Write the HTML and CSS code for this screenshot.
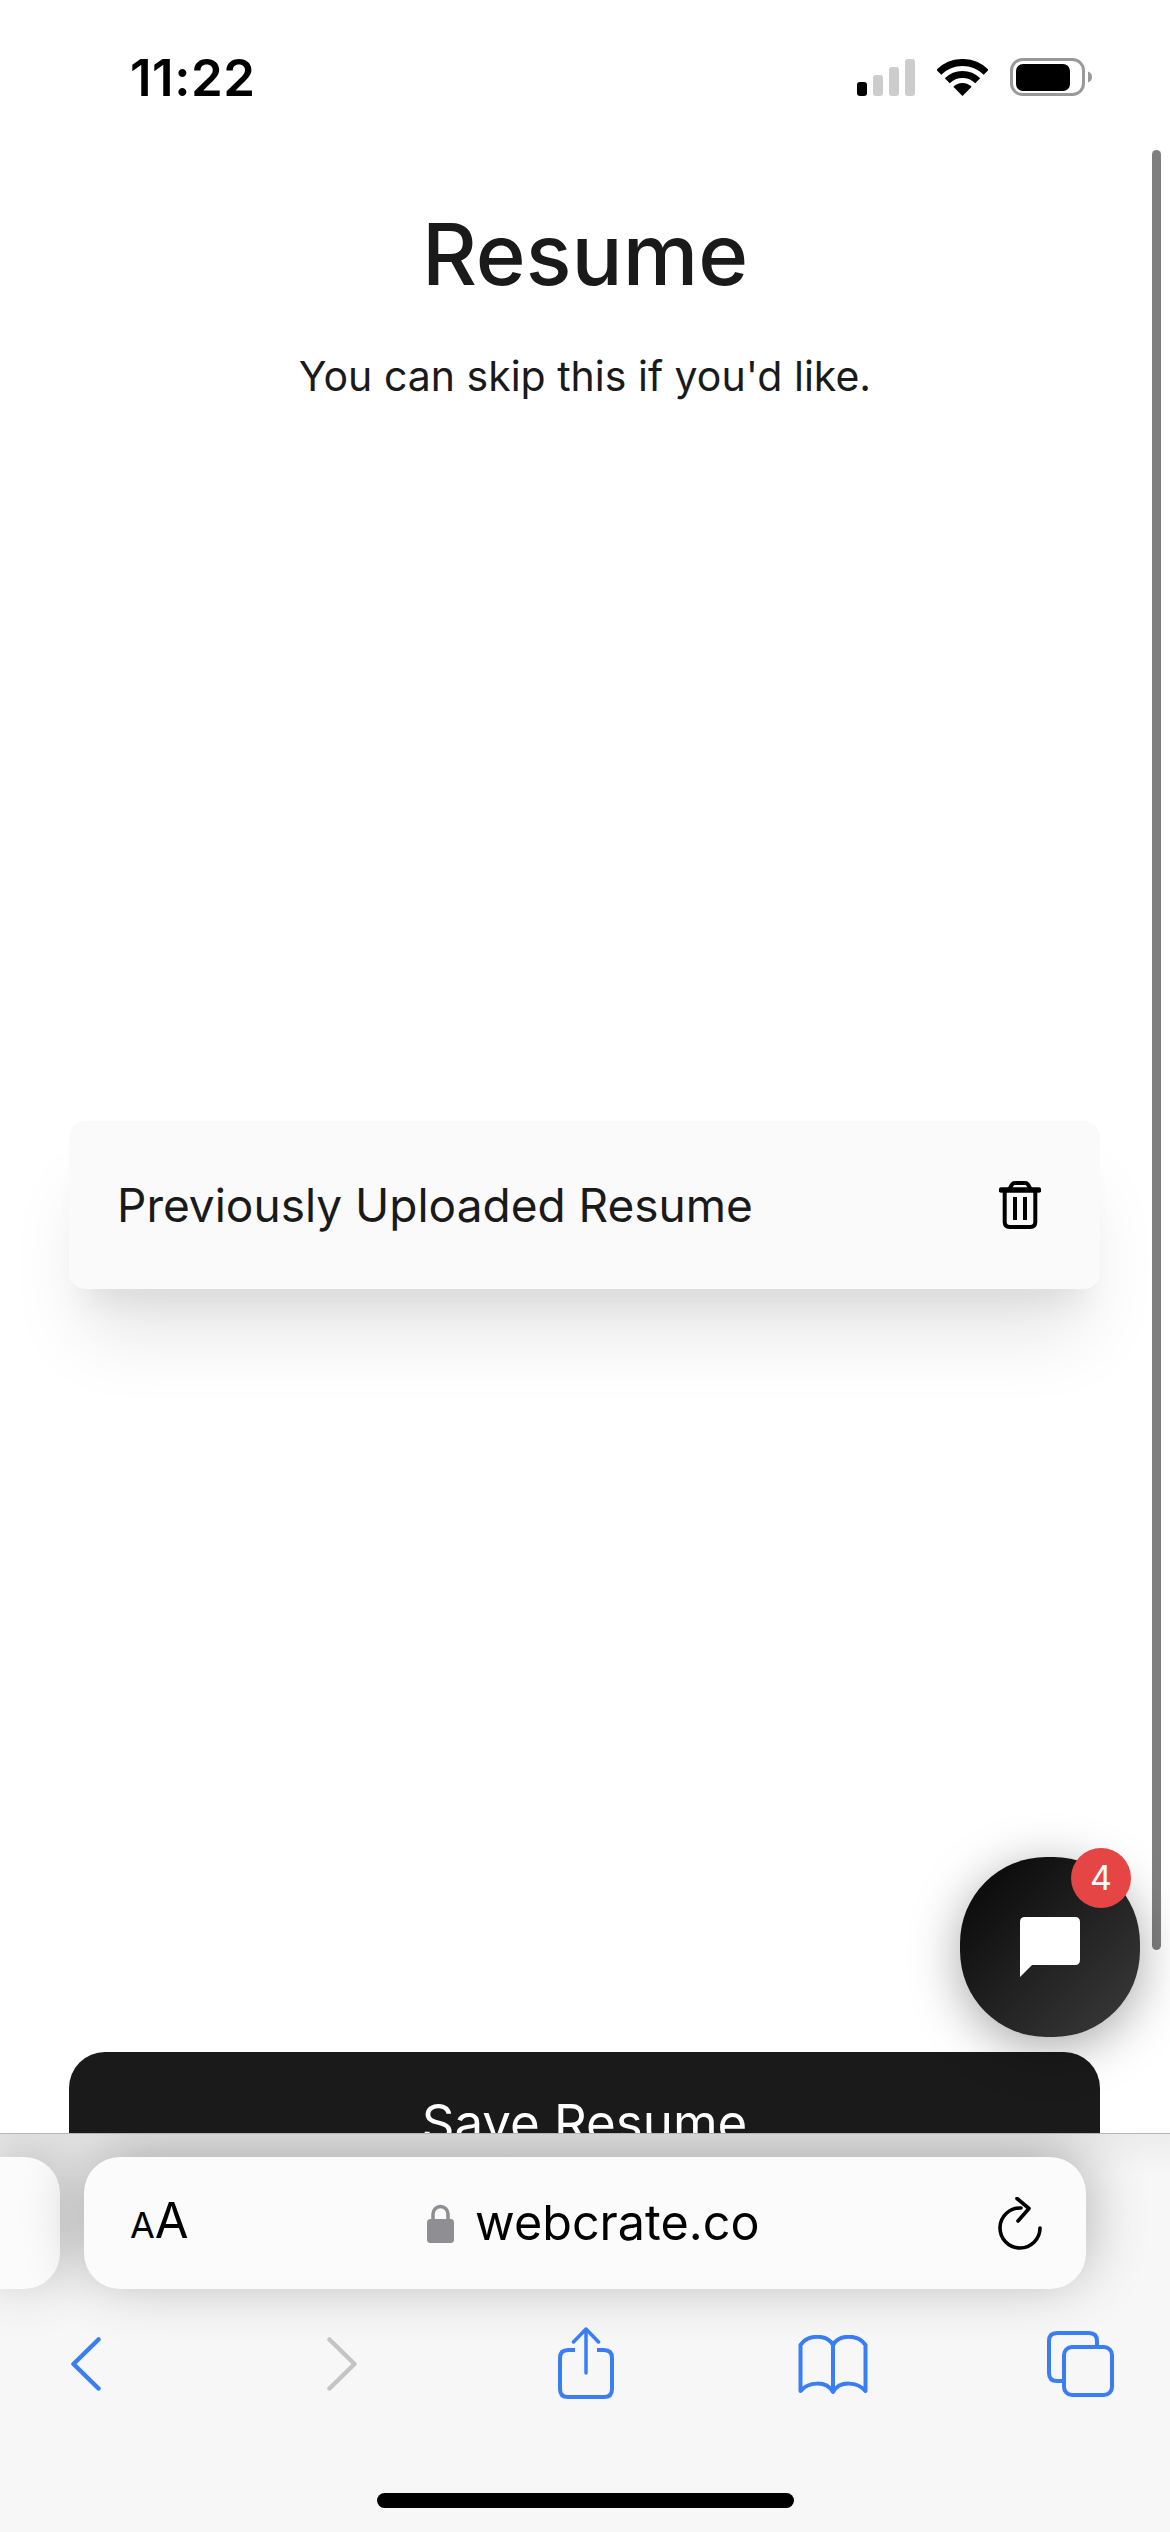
FILE: index.html
```html
<!DOCTYPE html>
<html lang="en">
	<head>
		<meta charset="utf-8" />
		<title>Resume</title>
		<link rel="stylesheet" href="styles.css">
	</head>

	<body>
		<div class="phone">
			<div class="page">
				<div class="status">
					<span class="clock">11:22</span>
					<div class="status-icons">
						<svg class="signal" width="58" height="37" viewBox="0 0 58 37">
							<rect x="0" y="23" width="10" height="14" rx="3" fill="#000" />
							<rect x="16" y="16" width="10" height="21" rx="3" fill="#ccc" />
							<rect x="32" y="8" width="10" height="29" rx="3" fill="#ccc" />
							<rect x="48" y="0" width="10" height="37" rx="3" fill="#ccc" />
						</svg>
						<svg class="wifi" width="51" height="37" viewBox="0 0 51 37">
							<path d="M25.5 37 L16.3 27.8 A13 13 0 0 1 34.7 27.8 Z" fill="#000" />
							<path d="M10.3 21.8 A21.5 21.5 0 0 1 40.7 21.8" fill="none" stroke="#000" stroke-width="7" />
							<path d="M1.8 13.3 A33.5 33.5 0 0 1 49.2 13.3" fill="none" stroke="#000" stroke-width="7" />
						</svg>
						<svg class="battery" width="83" height="38" viewBox="0 0 83 38">
							<rect x="1.5" y="1.5" width="72" height="35" rx="11" fill="none" stroke="#999" stroke-width="3" />
							<rect x="6" y="6" width="54" height="27" rx="7" fill="#000" />
							<path d="M78 13.5 C81 14.5 82 16.500 82 19 C82 21.500 81 23.500 78 24.500 Z" fill="#999" />
						</svg>
					</div>
				</div>

				<h1 class="title">Resume</h1>
				<p class="subtitle">You can skip this if you'd like.</p>

				<div class="card">
					<span class="card-label">Previously Uploaded Resume</span>
					<svg class="trash" width="42" height="48" viewBox="0 0 42 48">
						<path d="M2.500 9 H39.500" fill="none" stroke="#000" stroke-width="5.500" stroke-linecap="round" />
						<path d="M10.500 8 L13 3.500 Q14 2 16 2 H26 Q28 2 29 3.500 L31.500 8" fill="none" stroke="#000" stroke-width="4" />
						<path d="M5.700 10 V41 Q5.700 46 10.700 46 H31.300 Q36.300 46 36.300 41 V10" fill="none" stroke="#000" stroke-width="4" />
						<path d="M16 16 V39 M26 16 V39" fill="none" stroke="#000" stroke-width="4" />
					</svg>
				</div>

				<button class="save" type="button">Save Resume</button>

				<div class="scrollbar"></div>

				<div class="chat">
					<svg width="60" height="60" viewBox="0 0 60 60">
						<path d="M5 0 H55 Q60 0 60 5 V43 Q60 48 55 48 H12 L0 60 V5 Q0 0 5 0 Z" fill="#fff" />
					</svg>
					<span class="chat-count">4</span>
				</div>
			</div>

			<div class="toolbar">
				<div class="tabs-row">
					<div class="pill pill-prev"></div>
					<div class="pill pill-main">
						<span class="aa"><span class="aa-small">A</span>A</span>
						<span class="address">
							<svg class="lock" width="27" height="39" viewBox="0 0 27 39">
								<path d="M6 17 V10 A7.500 7.500 0 0 1 21 10 V17" fill="none" stroke="#8e8e93" stroke-width="3.500" />
								<rect x="0" y="15" width="27" height="24" rx="3.500" fill="#8e8e93" />
							</svg>
							<span class="url">webcrate.co</span>
						</span>
						<svg class="reload" width="44" height="53" viewBox="0 0 44 53">
							<path d="M23 11 A20 20 0 1 0 42 31" fill="none" stroke="#000" stroke-width="3.600" stroke-linecap="round" />
							<path d="M19 1.500 L31 11.500 L20 24" fill="none" stroke="#000" stroke-width="3.600" stroke-linecap="round" stroke-linejoin="round" />
						</svg>
					</div>
				</div>

				<div class="nav-row">
					<svg class="nav-back" width="30" height="54" viewBox="0 0 30 54">
						<path d="M27.500 2.500 L2.500 27 L27.500 51.500" fill="none" stroke="#3a7ef6" stroke-width="4.500" stroke-linecap="round" stroke-linejoin="round" />
					</svg>
					<svg class="nav-forward" width="30" height="54" viewBox="0 0 30 54">
						<path d="M2.500 2.500 L27.500 27 L2.500 51.500" fill="none" stroke="#c4c4c4" stroke-width="4.500" stroke-linecap="round" stroke-linejoin="round" />
					</svg>
					<svg class="nav-share" width="56" height="72" viewBox="0 0 56 72">
						<path d="M17 23 H10 Q2 23 2 31 V62 Q2 70 10 70 H46 Q54 70 54 62 V31 Q54 23 46 23 H39" fill="none" stroke="#3a7ef6" stroke-width="4" />
						<path d="M28 46 V2 M15.500 15 L28 2 L40.500 15" fill="none" stroke="#3a7ef6" stroke-width="3.500" stroke-linecap="round" stroke-linejoin="round" />
					</svg>
					<svg class="nav-book" width="70" height="60" viewBox="0 0 70 60">
						<path d="M35 10 C29 -1 10 -1 2.500 10 V56 C10 47 28 45 35 57 C42 45 60 47 67.500 56 V10 C60 -1 41 -1 35 10 Z M35 10 V57" fill="none" stroke="#3a7ef6" stroke-width="4" stroke-linejoin="round" />
					</svg>
					<svg class="nav-tabs" width="67" height="66" viewBox="0 0 67 66">
						<path d="M15 50 H10 Q2 50 2 42 V10 Q2 2 10 2 H42 Q50 2 50 10 V14" fill="none" stroke="#3a7ef6" stroke-width="4" />
						<rect x="17" y="16" width="48" height="48" rx="8" fill="none" stroke="#3a7ef6" stroke-width="4" />
					</svg>
				</div>

				<div class="home-bar"></div>
			</div>
		</div>
	</body>
</html>
```
FILE: styles.css
```css
html,
body {
	margin: 0;
	padding: 0;
	background: #fff;
}
body {
	font-family: Inter, "Liberation Sans", sans-serif;
	color: #1a1a1a;
}
svg {
	display: block;
	flex: none;
}
.phone {
	width: 1170px;
	height: 2532px;
	display: flex;
	flex-direction: column;
	overflow: hidden;
}
.page {
	position: relative;
	height: 2133px;
	overflow: hidden;
	background: #fff;
}
.status {
	height: 155px;
	padding: 0 77px 0 130px;
	box-sizing: border-box;
	display: flex;
	justify-content: space-between;
	align-items: flex-start;
}
.clock {
	margin-top: 48px;
	font-size: 51px;
	line-height: 59px;
	letter-spacing: 0.5px;
	font-weight: 600;
	color: #000;
}
.status-icons {
	margin-top: 58px;
	display: flex;
	align-items: flex-start;
	gap: 22px;
}
.signal {
	margin-top: 1px;
}
.wifi {
	margin-top: 1px;
}
.title {
	margin: 50px 0 0;
	font-size: 85px;
	line-height: 100px;
	font-weight: 500;
	text-align: center;
}
.subtitle {
	margin: 46px 0 0;
	font-size: 41px;
	line-height: 50px;
	text-align: center;
}
.card {
	margin: 720px 70px 0 69px;
	height: 168px;
	padding: 0 59px 0 48px;
	box-sizing: border-box;
	display: flex;
	justify-content: space-between;
	align-items: center;
	background: #fafafa;
	border-radius: 16px;
	box-shadow: 0 60px 75px -15px rgba(0, 0, 0, 0.1), 0 30px 30px -15px rgba(0, 0, 0, 0.06);
}
.card-label {
	font-size: 46px;
	line-height: 56px;
}
.save {
	display: block;
	width: 1031px;
	height: 140px;
	margin: 763px 0 0 69px;
	padding: 0;
	border: 0;
	border-radius: 36px;
	background: #1a1a1a;
	color: #fff;
	font-family: inherit;
	font-size: 51px;
}
.scrollbar {
	position: absolute;
	left: 1152px;
	top: 150px;
	width: 9px;
	height: 1800px;
	border-radius: 5px;
	background: #7f7f7f;
}
.chat {
	position: absolute;
	left: 960px;
	top: 1857px;
	width: 180px;
	height: 180px;
	display: flex;
	align-items: center;
	justify-content: center;
	border-radius: 86px;
	background: linear-gradient(135deg, #050505, #3c3c3c);
	box-shadow: 0 10px 50px rgba(0, 0, 0, 0.35);
}
.chat-count {
	position: absolute;
	left: 111px;
	top: -9px;
	width: 60px;
	height: 60px;
	border-radius: 50%;
	background: #e54545;
	color: #fff;
	font-size: 34px;
	line-height: 60px;
	text-align: center;
}
.toolbar {
	position: relative;
	flex: 1;
	background: linear-gradient(#ececec, #f7f7f7 40px);
	border-top: 1px solid #b5b5b5;
	overflow: hidden;
}
.tabs-row {
	display: flex;
	gap: 24px;
	margin-top: 23px;
}
.pill {
	height: 132px;
	background: #fbfbfb;
	box-shadow: 0 -10px 60px rgba(0, 0, 0, 0.3);
}
.pill-prev {
	width: 60px;
	border-radius: 0 36px 36px 0;
}
.pill-main {
	width: 1002px;
	padding: 0 44px 0 46px;
	box-sizing: border-box;
	display: flex;
	justify-content: space-between;
	align-items: center;
	border-radius: 36px;
	color: #000;
}
.aa {
	font-size: 49px;
	line-height: 50px;
}
.aa-small {
	font-size: 36px;
}
.address {
	display: flex;
	align-items: center;
	gap: 21px;
}
.url {
	font-size: 48.5px;
	line-height: 60px;
}
.nav-row {
	display: flex;
	align-items: flex-start;
	margin-top: 38px;
	padding-left: 71px;
}
.nav-back {
	margin-top: 10px;
}
.nav-forward {
	margin: 10px 0 0 226px;
}
.nav-share {
	margin-left: 201px;
}
.nav-book {
	margin: 8px 0 0 184px;
}
.nav-tabs {
	margin: 4px 0 0 179px;
}
.home-bar {
	position: absolute;
	left: 377px;
	top: 359px;
	width: 417px;
	height: 15px;
	border-radius: 8px;
	background: #000;
}
```
